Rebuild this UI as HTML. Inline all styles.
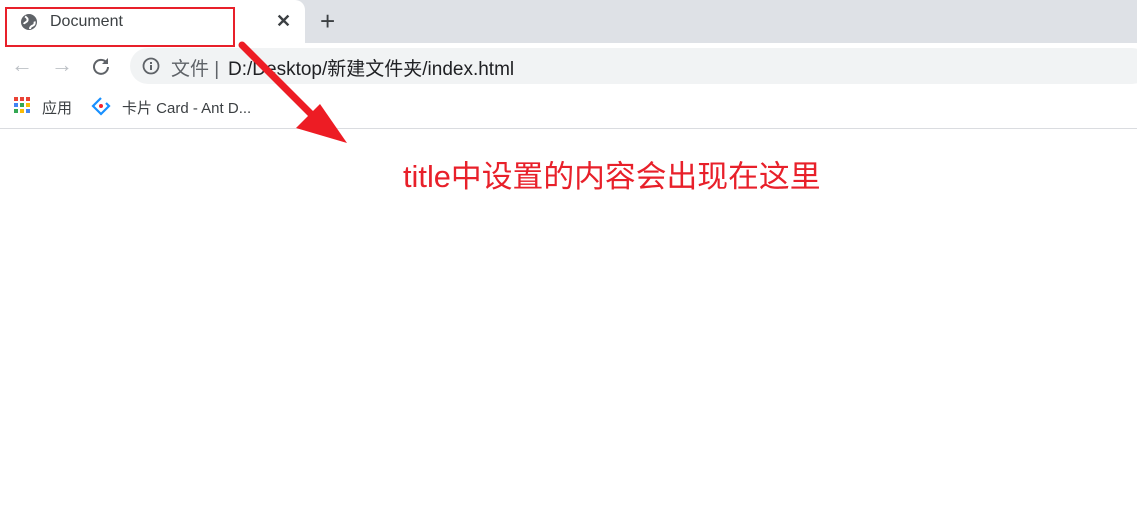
<!DOCTYPE html>
<html><head><meta charset="utf-8"><style>
*{margin:0;padding:0;box-sizing:border-box}
body{width:1137px;height:523px;overflow:hidden;background:#fff;font-family:"Liberation Sans","Noto Sans CJK SC",sans-serif;position:relative}
.strip{position:absolute;left:0;top:0;width:1137px;height:43px;background:#dee1e6}
.tab{position:absolute;left:0;top:0;width:305px;height:44px;background:#fff;border-top-right-radius:10px}
.t{position:absolute;white-space:nowrap}
.omni{position:absolute;left:130px;top:48px;width:1020px;height:36px;background:#f1f3f4;border-radius:18px}
.line{position:absolute;left:0;top:128px;width:1137px;height:1px;background:#dadce0}
</style></head><body>
<div class="strip"></div>
<div class="tab"></div>
<svg class="t" style="left:20px;top:13px" width="18" height="18" viewBox="0 0 18 18"><circle cx="9" cy="9" r="8" fill="#5f6368"/><path d="M5 3.5c2 1 3 2 2.5 4S4.5 9 4 11M10 16c0-2 1.5-3 3-3.5s2-2.5 1.5-4" stroke="#fff" stroke-width="2" fill="none"/></svg>
<div class="t" style="left:50px;top:13px;font-size:16px;color:#3c4043">Document</div>
<div class="t" style="left:276px;top:11px;font-size:18px;font-weight:bold;color:#3c4043">✕</div>
<div class="t" style="left:320px;top:6px;font-size:26px;color:#3c4043">+</div>
<div style="position:absolute;left:5px;top:7px;width:230px;height:40px;border:2px solid #e8202a"></div>
<div class="omni"></div>
<div class="t" style="left:11px;top:52px;font-size:22px;color:#bdc1c6">←</div>
<div class="t" style="left:51px;top:52px;font-size:22px;color:#bdc1c6">→</div>
<svg class="t" style="left:91px;top:56px" width="20" height="20" viewBox="0 0 20 20"><path d="M15.5 6.5A7 7 0 1 0 17 11" stroke="#5f6368" stroke-width="2" fill="none"/><path d="M17 2v6h-6z" fill="#5f6368"/></svg>
<svg class="t" style="left:142px;top:57px" width="18" height="18" viewBox="0 0 18 18"><circle cx="9" cy="9" r="7.5" stroke="#5f6368" stroke-width="1.8" fill="none"/><rect x="8" y="8" width="2" height="5" fill="#5f6368"/><rect x="8" y="5" width="2" height="2" fill="#5f6368"/></svg>
<div class="t" style="left:171px;top:54px;font-size:19px;color:#5f6368">文件 |</div>
<div class="t" style="left:228px;top:54px;font-size:19px;color:#202124">D:/Desktop/新建文件夹/index.html</div>
<svg class="t" style="left:14px;top:97px" width="16" height="16"><g><rect x="0" y="0" width="4" height="4" fill="#ea4335"/><rect x="6" y="0" width="4" height="4" fill="#ea4335"/><rect x="12" y="0" width="4" height="4" fill="#ea4335"/><rect x="0" y="6" width="4" height="4" fill="#4285f4"/><rect x="6" y="6" width="4" height="4" fill="#34a853"/><rect x="12" y="6" width="4" height="4" fill="#fbbc05"/><rect x="0" y="12" width="4" height="4" fill="#34a853"/><rect x="6" y="12" width="4" height="4" fill="#fbbc05"/><rect x="12" y="12" width="4" height="4" fill="#4285f4"/></g></svg>
<div class="t" style="left:42px;top:97px;font-size:15px;color:#3c4043">应用</div>
<svg class="t" style="left:91px;top:96px" width="20" height="20" viewBox="0 0 20 20"><path d="M10 2L2 10l8 8 8-8-3-3" stroke="#1890ff" stroke-width="2.2" fill="none"/><circle cx="10" cy="10" r="2" fill="#f5222d"/></svg>
<div class="t" style="left:122px;top:97px;font-size:15px;color:#3c4043">卡片 Card - Ant D...</div>
<div class="line"></div>
<svg class="t" style="left:0;top:0" width="400" height="160"><path d="M242 45L312 115" stroke="#ed1c24" stroke-width="7" stroke-linecap="round"/><path d="M347 143L296 128L320 104z" fill="#ed1c24"/></svg>
<div class="t" style="left:403px;top:151px;font-size:30.8px;color:#e8202a">title中设置的内容会出现在这里</div>
</body></html>
